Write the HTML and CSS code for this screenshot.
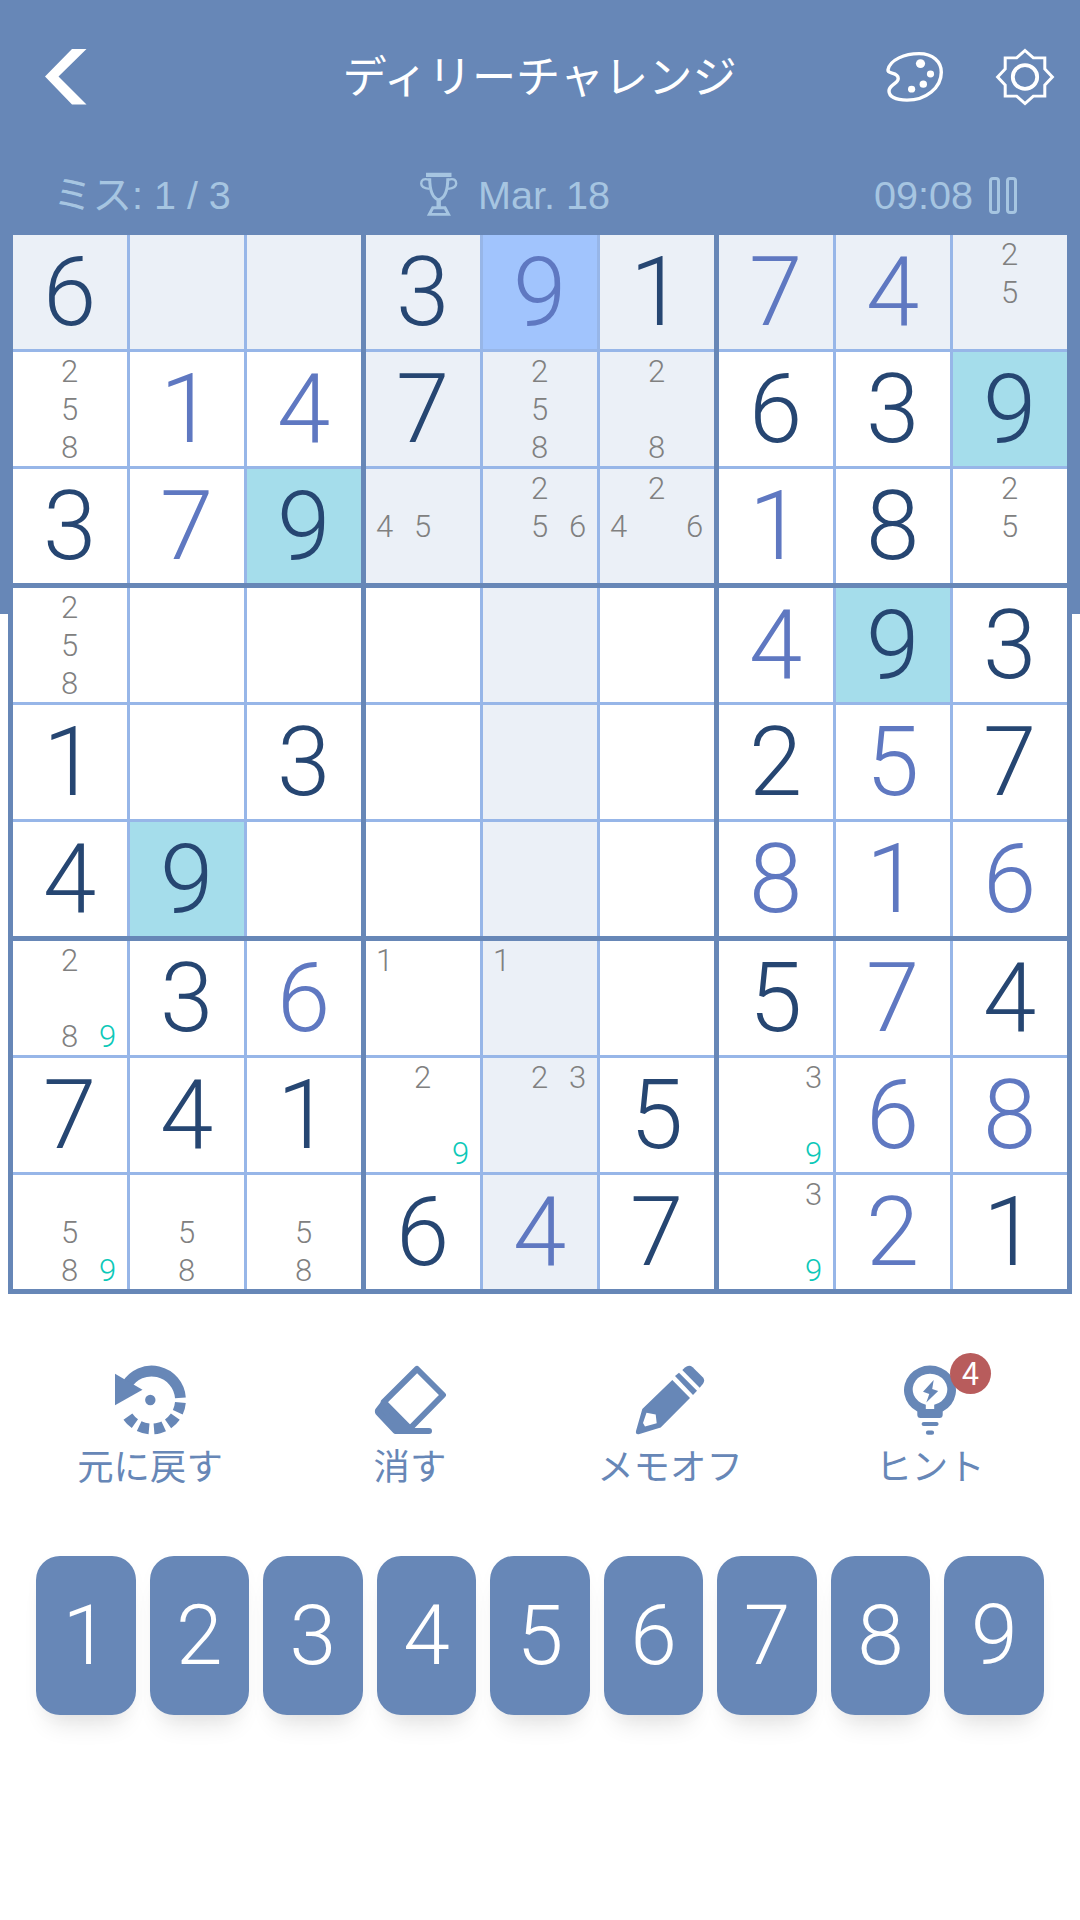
FILE: index.html
```html
<!DOCTYPE html>
<html lang="ja">
<head>
    <meta charset="UTF-8">
    <meta name="viewport" content="width=device-width, initial-scale=1.0">
    <title>ディリーチャレンジ</title>
    <link rel="stylesheet" href="styles.css">
</head>
<body>
    <header class="header">
        <div class="header-left">
            <svg class="back" width="42" height="56" viewBox="0 0 42 58" preserveAspectRatio="none">
                <path fill="#fff" d="M41.5 0H27L0 28.5L27 57.5H41.5L13.5 28.5Z"/>
            </svg>
        </div>
        <h1>ディリーチャレンジ</h1>
        <div class="header-right">
            <svg width="60" height="52" viewBox="0 0 60 54" preserveAspectRatio="none" fill="none" stroke="#fff" stroke-width="3.4">
                <path d="M3 19.5C5 9 20 2.7 34 2.7C48 2.7 56.3 11 56.3 22C56.3 38 41 51 22 51C10 51 4 47 4 41.5C4 35 13.2 34 13.2 28.5C13.2 21 2 24.5 3 19.5Z"/>
                <g fill="#fff" stroke="none">
                    <circle cx="35.5" cy="13.1" r="4.6"/>
                    <circle cx="45.5" cy="23.8" r="3.6"/>
                    <circle cx="38.3" cy="34.4" r="3.7"/>
                    <circle cx="26.6" cy="39.6" r="3.6"/>
                </g>
            </svg>
            <svg width="60" height="58" viewBox="-30 -30 60 60" preserveAspectRatio="none" fill="none" stroke="#fff">
                <path stroke-width="3" d="M0 -27.4L8.3 -19.8H19.8V-8.3L27.4 0L19.8 8.3V19.8H8.3L0 27.4L-8.3 19.8H-19.8V8.3L-27.4 0L-19.8 -8.3V-19.8H-8.3Z"/>
                <circle r="12.2" stroke-width="3.8"/>
            </svg>
        </div>
    </header>

    <div class="status">
        <div class="mistakes">ミス: 1 / 3</div>
        <div class="date">
            <svg width="40" height="46" viewBox="0 0 40 48" preserveAspectRatio="none" fill="none" stroke="#a6c5e1" stroke-width="3">
                <path stroke-width="4.4" d="M7 3H32.5"/>
                <path d="M10.7 6.5C10.7 17 13 27 19.7 29C26.4 27 28.8 17 28.8 6.5"/>
                <path stroke-width="2.4" d="M10.5 8.2C4 6 2.2 9 2.2 12C2.2 15 5 17 10.5 17.6M29 8.2C35.5 6 37.2 9 37.2 12C37.2 15 34.5 17 29 17.6"/>
                <path stroke-width="4.4" d="M19.7 28V37"/>
                <path d="M13.8 37.3H26L29.5 44.2H10.3Z"/>
            </svg>
            <span>Mar. 18</span>
        </div>
        <div class="timer">
            <span>09:08</span>
            <i class="bar"></i>
            <i class="bar"></i>
        </div>
    </div>

    <div class="board" id="board"></div>

    <div class="tools">
        <div class="tool">
            <svg width="74" height="72" viewBox="-1 0 74 72" fill="none" stroke="#6787b7">
                <path stroke-width="10.8" d="M12.6 20.4A28.9 28.9 0 0 1 66.4 32.8"/>
                <path stroke-width="10.8" stroke-dasharray="10.2 4.93" d="M66.4 37.5A28.9 28.9 0 0 1 13.9 51.6"/>
                <path fill="#6787b7" stroke="none" d="M1 8.7V40.3L28.5 24.7Z"/>
                <circle cx="36.3" cy="35" r="5.2" fill="#6787b7" stroke="none"/>
            </svg>
            <span>元に戻す</span>
        </div>
        <div class="tool">
            <svg width="72" height="72" viewBox="0 0 72 72" fill="none" stroke="#6787b7" stroke-width="6" stroke-linejoin="round" stroke-linecap="round">
                <path d="M43 4L69 30L36 63.5L9.8 37Z"/>
                <path fill="#6787b7" d="M9.8 38L4 45.5Q3.5 47 5 48.5L21.5 66H55H36Z"/>
            </svg>
            <span>消す</span>
        </div>
        <div class="tool">
            <svg width="72" height="72" viewBox="0 0 72 72" fill="#6787b7">
                <path fill-rule="evenodd" d="M38.3 15L56 33L26.7 62.5L5.5 69Q1.3 70 2 66L8.3 44ZM12.5 47.7L9 58L11 61.5L22.7 58.3L21.7 49.5Z"/>
                <path d="M41 11L45 7.7L63 25.7L59 30Z"/>
                <path d="M48.3 5L51 2.5Q55 -.7 58.7 2.2L69 12.5Q71.3 15.5 69 18.8L65.7 22.7Z"/>
            </svg>
            <span>メモオフ</span>
        </div>
        <div class="tool">
            <div class="hint">
                <svg width="72" height="72" viewBox="0 0 72 72" fill="#6787b7">
                    <path fill-rule="evenodd" d="M23.3 46.5A26 24.5 0 1 1 48.7 46.5V49.5Q48.7 53 45.5 53H26.5Q23.3 53 23.3 49.5ZM31.8 44H40.2V39.8A17.3 15.8 0 1 0 31.8 39.8Z"/>
                    <path d="M39.7 15L29 26.7L35.3 29L32.3 37.6L44.2 26L38.2 24Z"/>
                    <path stroke="#6787b7" stroke-width="4.2" stroke-linecap="round" d="M29.7 59H42.5M34 67.7H38"/>
                </svg>
                <b class="badge">4</b>
            </div>
            <span>ヒント</span>
        </div>
    </div>

    <div class="keypad">
        <button>1</button>
        <button>2</button>
        <button>3</button>
        <button>4</button>
        <button>5</button>
        <button>6</button>
        <button>7</button>
        <button>8</button>
        <button>9</button>
    </div>

    <script>
        // "6" = given, "u9" = entered by the player, "n258" = notes
        const rows = [
            ['6', '', '', '3', 'u9', '1', 'u7', 'u4', 'n25'],
            ['n258', 'u1', 'u4', '7', 'n258', 'n28', '6', '3', '9'],
            ['3', 'u7', '9', 'n45', 'n256', 'n246', 'u1', '8', 'n25'],
            ['n258', '', '', '', '', '', 'u4', '9', '3'],
            ['1', '', '3', '', '', '', '2', 'u5', '7'],
            ['4', '9', '', '', '', '', 'u8', 'u1', 'u6'],
            ['n289', '3', 'u6', 'n1', 'n1', '', '5', 'u7', '4'],
            ['7', '4', '1', 'n29', 'n23', '5', 'n39', 'u6', 'u8'],
            ['n589', 'n58', 'n58', '6', 'u4', '7', 'n39', 'u2', '1']
        ];
        const selected = { row: 0, col: 4, value: '9' };

        function createCell(row, col) {
            const text = rows[row][col];
            const cell = document.createElement('div');
            cell.className = 'cell';

            const sameBox = row < 3 && col > 2 && col < 6;
            if (row === selected.row && col === selected.col) {
                cell.classList.add('selected');
            } else if (text === selected.value) {
                cell.classList.add('same');
            } else if (row === selected.row || col === selected.col || sameBox) {
                cell.classList.add('related');
            }

            if (text[0] === 'n') {
                cell.classList.add('notes');
                for (let n = 1; n <= 9; n++) {
                    const note = document.createElement('span');
                    if (text.includes(n)) {
                        note.textContent = n;
                    }
                    if (String(n) === selected.value) {
                        note.className = 'note-same';
                    }
                    cell.appendChild(note);
                }
            } else if (text[0] === 'u') {
                cell.classList.add('user');
                cell.textContent = text[1];
            } else {
                cell.textContent = text;
            }
            return cell;
        }

        const board = document.getElementById('board');
        for (let b = 0; b < 9; b++) {
            const box = document.createElement('div');
            box.className = 'box';
            for (let i = 0; i < 9; i++) {
                const row = Math.floor(b / 3) * 3 + Math.floor(i / 3);
                const col = (b % 3) * 3 + (i % 3);
                box.appendChild(createCell(row, col));
            }
            board.appendChild(box);
        }
    </script>
</body>
</html>
```
FILE: styles.css
```css
* {
    box-sizing: border-box;
}

body {
    margin: 0;
    width: 1080px;
    height: 1920px;
    overflow: hidden;
    font-family: Roboto, "Noto Sans CJK JP", sans-serif;
    background: linear-gradient(#6787b7 614px, #fff 614px);
}

svg {
    display: block;
}

.header {
    display: grid;
    grid-template-columns: 1fr auto 1fr;
    align-items: center;
    height: 156px;
    padding: 0 25px 0 45px;
}

.header-left,
.header-right {
    padding-bottom: 3px;
}

.header h1 {
    margin: 0 0 0 -21px;
    padding-bottom: 9px;
    font-family: "Noto Sans CJK JP", sans-serif;
    font-size: 44.2px;
    font-weight: 400;
    line-height: 60px;
    color: #fff;
}

.header-right {
    display: flex;
    justify-content: flex-end;
    align-items: center;
    gap: 50px;
}

.status {
    display: grid;
    grid-template-columns: 366px 1fr 1fr;
    align-items: center;
    height: 74px;
    padding: 4px 63px 0 53px;
    font-family: "Liberation Sans", "Noto Sans CJK JP", sans-serif;
    font-size: 40px;
    line-height: 60px;
    color: #a6c5e1;
}

.mistakes {
    font-size: 39.5px;
}

.date,
.timer {
    display: flex;
    align-items: center;
}

.date {
    gap: 19px;
    font-size: 39.6px;
}

.timer {
    justify-content: flex-end;
    font-size: 39.6px;
}

.bar {
    width: 11px;
    height: 37px;
    border: 3px solid #a6c5e1;
    border-radius: 4px;
    margin-left: 6px;
}

.timer span {
    margin-right: 10px;
}

.board {
    display: grid;
    grid-template-columns: repeat(3, 348px);
    gap: 5px;
    width: 1064px;
    margin: 0 auto;
    padding: 5px;
    background: #6787b7;
}

.box {
    display: grid;
    grid-template-columns: repeat(3, 114px);
    grid-auto-rows: 114px;
    gap: 3px;
    background: #97b6e8;
}

.cell {
    padding-right: 1px;
    background: #fff;
    color: #264672;
    font-size: 96px;
    font-weight: 300;
    line-height: 115px;
    text-align: center;
}

.user {
    color: #5f78c1;
}

.related {
    background: #ebf0f7;
}

.same {
    background: #a5ddeb;
}

.selected {
    background: #a1c4fd;
}

.notes {
    display: grid;
    grid-template-columns: repeat(3, 38px);
    grid-auto-rows: 38px;
    font-size: 31px;
    line-height: 40px;
    color: #808080;
}

.notes span {
    padding-right: 1px;
}

.notes .note-same {
    color: #0cc8b8;
}

.tools {
    display: grid;
    grid-template-columns: repeat(4, 260px);
    margin-top: 71px;
    padding: 0 20px;
}

.tool {
    display: flex;
    flex-direction: column;
    align-items: center;
    font-family: "Noto Sans CJK JP", sans-serif;
    font-size: 36.4px;
    line-height: 54px;
    color: #6787b7;
}

.hint {
    position: relative;
}

.badge {
    position: absolute;
    left: 56px;
    top: -12px;
    width: 41px;
    height: 41px;
    border-radius: 50%;
    background: #b85c5c;
    color: #fff;
    font-size: 31px;
    font-weight: 400;
    line-height: 38px;
    text-align: center;
}

.keypad {
    display: grid;
    grid-template-columns: repeat(9, 1fr);
    gap: 14px;
    margin-top: 65px;
    padding: 0 36px;
}

.keypad button {
    height: 159px;
    padding: 0;
    border: none;
    border-radius: 24px;
    background: #6787b7;
    box-shadow: 0 20px 24px -12px rgba(0, 0, 0, 0.12), 0 4px 18px rgba(0, 0, 0, 0.02);
    color: #fff;
    font-family: Roboto, sans-serif;
    font-size: 84px;
    font-weight: 300;
    text-align: center;
}
```
